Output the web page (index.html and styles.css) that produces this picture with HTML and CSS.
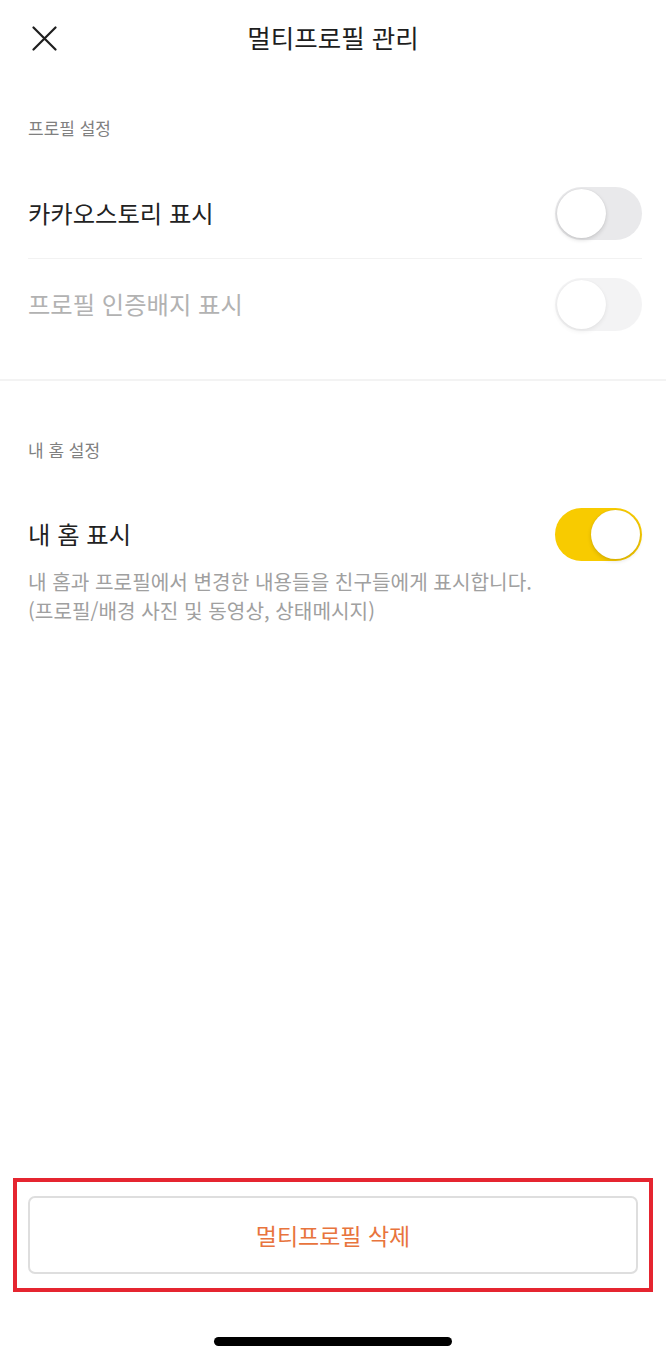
FILE: index.html
```html
<!DOCTYPE html>
<html lang="ko">
<head>
  <meta charset="UTF-8" />
  <meta name="viewport" content="width=device-width, initial-scale=1.0" />
  <title>멀티프로필 관리</title>
  <link rel="stylesheet" href="styles.css">
</head>
<body>
  <div class="app">
    <header class="topbar">
      <button class="close-btn" aria-label="닫기">
        <svg width="25" height="25" viewBox="0 0 25 25">
          <path d="M1.5 1.5 L23.5 23.5 M23.5 1.5 L1.5 23.5" stroke="#1e1e1e" stroke-width="2.2" stroke-linecap="round" fill="none" />
        </svg>
      </button>
      <h1 class="title">멀티프로필 관리</h1>
      <span></span>
    </header>

    <main class="content">
      <section class="section section-profile">
        <h2 class="section-label">프로필 설정</h2>
        <div class="row row-divided">
          <span class="row-text">카카오스토리 표시</span>
          <span class="toggle"><span class="knob"></span></span>
        </div>
        <div class="row disabled">
          <span class="row-text">프로필 인증배지 표시</span>
          <span class="toggle"><span class="knob"></span></span>
        </div>
      </section>

      <section class="section section-home">
        <h2 class="section-label">내 홈 설정</h2>
        <div class="row row-home">
          <span class="row-text">내 홈 표시</span>
          <span class="toggle on"><span class="knob"></span></span>
        </div>
        <p class="description">내 홈과 프로필에서 변경한 내용들을 친구들에게 표시합니다.<br>(프로필/배경 사진 및 동영상, 상태메시지)</p>
      </section>
    </main>

    <footer class="bottom">
      <div class="highlight">
        <button class="delete-btn">멀티프로필 삭제</button>
      </div>
      <div class="home-indicator"></div>
    </footer>
  </div>
</body>
</html>
```

FILE: styles.css
```css
* {
  box-sizing: border-box;
}
body {
  margin: 0;
  background: #fff;
  font-family: "Noto Sans CJK KR", "Noto Sans", sans-serif;
  color: #222;
}
.app {
  width: 666px;
  height: 1360px;
  display: flex;
  flex-direction: column;
}
.topbar {
  height: 77px;
  display: grid;
  grid-template-columns: 1fr auto 1fr;
  align-items: center;
}
.close-btn {
  justify-self: start;
  margin-left: 32px;
  padding: 0;
  border: 0;
  background: none;
  width: 25px;
  height: 25px;
  display: flex;
}
.title {
  margin: 0 0 3px;
  font-size: 25.5px;
  font-weight: 400;
  line-height: 30px;
  color: #1e1e1e;
}
.content {
  flex: 1;
}
.section-profile {
  padding-top: 41px;
  padding-bottom: 30px;
  border-bottom: 2px solid #f3f3f3;
}
.section-home {
  padding-top: 59px;
}
.section-label {
  margin: 0 0 30px 28px;
  font-size: 17px;
  font-weight: 400;
  line-height: 20px;
  color: #808080;
}
.row {
  height: 90px;
  margin: 0 24px 0 28px;
  display: flex;
  align-items: center;
  justify-content: space-between;
}
.row-divided {
  height: 91px;
  border-bottom: 1px solid #f2f2f2;
}
.row-home {
  height: 88px;
}
.row-text {
  font-size: 24.3px;
  line-height: 30px;
  color: #222;
}
.disabled .row-text {
  color: #b2b2b2;
}
.disabled .toggle {
  opacity: 0.5;
}
.toggle {
  width: 87px;
  height: 53px;
  border-radius: 27px;
  background: #e9e9eb;
  padding: 2px;
  display: flex;
}
.toggle.on {
  background: #f8cb00;
  justify-content: flex-end;
}
.knob {
  width: 49px;
  height: 49px;
  border-radius: 50%;
  background: #fff;
  box-shadow: 0 2px 4px rgba(0,0,0,0.14), 0 0 1px rgba(0,0,0,0.12);
}
.description {
  margin: -10px 0 0 28px;
  font-size: 20.2px;
  line-height: 28.5px;
  color: #a0a0a0;
}
.bottom {
  display: flex;
  flex-direction: column;
  align-items: center;
  padding-bottom: 14px;
}
.highlight {
  width: 640px;
  border: 4px solid #e52530;
  padding: 14px 11px;
  margin-bottom: 45px;
}
.delete-btn {
  width: 100%;
  height: 78px;
  border: 2px solid #dedede;
  border-radius: 7px;
  background: #fff;
  font-family: inherit;
  font-size: 23px;
  color: #e8743d;
}
.home-indicator {
  width: 238px;
  height: 9px;
  border-radius: 5px;
  background: #000;
}
```
